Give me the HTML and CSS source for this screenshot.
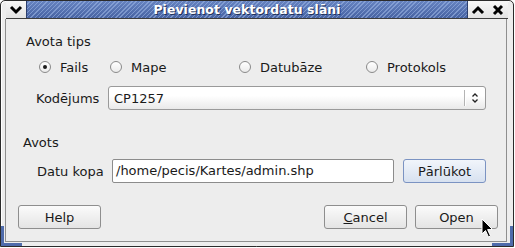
FILE: index.html
```html
<!DOCTYPE html>
<html lang="lv">
<head>
  <meta charset="UTF-8">
  <title>Pievienot vektordatu slāni</title>
  <link rel="stylesheet" href="styles.css">
</head>
<body>
  <div class="window">
    <div class="titlebar">
      <div class="tb-btn tb-menu">
        <svg width="14" height="10" viewBox="0 0 14 10"><path d="M2 2 L7 7 L12 2" fill="none" stroke="#000" stroke-width="3"/></svg>
      </div>
      <div class="tb-title">Pievienot vektordatu slāni</div>
      <div class="tb-btn">
        <svg width="14" height="10" viewBox="0 0 14 10"><path d="M2 8 L7 3 L12 8" fill="none" stroke="#000" stroke-width="3"/></svg>
      </div>
      <div class="tb-btn">
        <svg width="12" height="12" viewBox="0 0 12 12"><path d="M2 2 L10 10 M10 2 L2 10" fill="none" stroke="#000" stroke-width="3"/></svg>
      </div>
    </div>

    <div class="client">
      <div class="heading first">Avota tips</div>
      <div class="radios">
        <label class="radio"><span class="dot checked"></span>Fails</label>
        <label class="radio"><span class="dot"></span>Mape</label>
        <label class="radio"><span class="dot"></span>Datubāze</label>
        <label class="radio"><span class="dot"></span>Protokols</label>
      </div>
      <div class="row enc-row">
        <span class="label enc-label">Kodējums</span>
        <div class="combo">
          <span class="combo-text">CP1257</span>
          <span class="combo-sep"></span>
          <svg class="combo-arrows" width="8" height="12" viewBox="0 0 8 12"><path d="M1.5 4.5 L4 2 L6.5 4.5 M1.5 7.5 L4 10 L6.5 7.5" fill="none" stroke="#222" stroke-width="1.3"/></svg>
        </div>
      </div>

      <div class="heading second">Avots</div>
      <div class="row src-row">
        <span class="label src-label">Datu kopa</span>
        <div class="entry">/home/pecis/Kartes/admin.shp</div>
        <button class="btn btn-hover">Pārlūkot</button>
      </div>

      <div class="actions">
        <button class="btn">Help</button>
        <button class="btn cancel"><u>C</u>ancel</button>
        <button class="btn">Open</button>
      </div>
    </div>

    <span class="grip grip-left"></span>
    <span class="grip grip-right"></span>

    <svg class="cursor" width="14" height="21" viewBox="0 0 14 21">
      <path d="M1 1 L1 16 L4.5 12.5 L7.5 19 L9.5 18 L6.6 11.6 L11.5 11.5 Z" fill="#000" stroke="#fff" stroke-width="1"/>
    </svg>
  </div>
</body>
</html>
```

FILE: styles.css
```css
body {
  margin: 0;
  background: #ffffff;
  font-family: "DejaVu Sans", sans-serif;
  font-size: 13px;
  color: #1a1a1a;
}

.window {
  position: relative;
  width: 514px;
  height: 247px;
  box-sizing: border-box;
  border: 1px solid #2b2b2b;
  border-radius: 5px 5px 0 0;
  background: #ededed;
  box-shadow: inset 1px 1px 0 #ffffff;
  overflow: hidden;
}

/* title bar */
.titlebar {
  display: flex;
  height: 17px;
  margin-left: 5px;
  width: 502px;
  border-bottom: 1px solid #3d3d3d;
}

.tb-btn {
  width: 20px;
  display: flex;
  align-items: center;
  justify-content: center;
  background: linear-gradient(#f7f7f7, #e2e2e2);
}

.tb-menu {
  width: 20px;
}

.tb-title {
  flex: 1;
  text-align: center;
  font-weight: bold;
  font-size: 12.4px;
  line-height: 17px;
  color: #ffffff;
  text-shadow: 1px 1px 0 #23325a;
  letter-spacing: 0.1px;
  background:
    repeating-linear-gradient(135deg, rgba(255,255,255,0) 0 2px, rgba(160,185,230,0.55) 2px 3px),
    linear-gradient(#6683c0, #4763a3);
  border-left: 1px solid #2c3f6e;
  border-right: 1px solid #2c3f6e;
}

/* client area */
.client {
  margin-left: 4px;
  width: 502px;
  height: 223px;
  box-sizing: border-box;
  border: 1px solid #8e8e8e;
  border-top: none;
  padding-top: 15px;
}

.heading {
  line-height: 16px;
}

.heading.first {
  padding-left: 20px;
}

.heading.second {
  padding-left: 17px;
  margin-top: 25px;
}

.radios {
  display: grid;
  grid-template-columns: 71px 129px 127px auto;
  margin: 8px 0 0 33px;
  height: 18px;
  align-items: center;
}

.radio {
  display: flex;
  align-items: center;
  gap: 9px;
}

.dot {
  width: 12px;
  height: 12px;
  box-sizing: border-box;
  border-radius: 50%;
  border: 1px solid #8a8a8a;
  background: linear-gradient(#ffffff, #ebebeb);
  position: relative;
}

.dot.checked::after {
  content: "";
  position: absolute;
  left: 3px;
  top: 3px;
  width: 4px;
  height: 4px;
  border-radius: 50%;
  background: #1c1c1c;
}

.row {
  display: flex;
  align-items: center;
  height: 24px;
}

.enc-row {
  margin-top: 10px;
  padding-left: 30px;
}

.enc-label {
  width: 72px;
}

.combo {
  width: 378px;
  height: 24px;
  box-sizing: border-box;
  border: 1px solid #9a9a9a;
  border-radius: 3px;
  background: linear-gradient(#ffffff 40%, #e9e9e9);
  display: flex;
  align-items: center;
}

.combo-text {
  flex: 1;
  padding-left: 5px;
}

.combo-sep {
  width: 1px;
  height: 16px;
  background: #b4b4b4;
  box-shadow: 1px 0 0 #ffffff;
}

.combo-arrows {
  margin: 0 6px 0 6px;
}

.src-row {
  margin-top: 8px;
  padding-left: 31px;
}

.src-label {
  width: 75px;
}

.entry {
  width: 282px;
  height: 24px;
  box-sizing: border-box;
  border: 1px solid #8c8c8c;
  border-radius: 2px;
  background: #ffffff;
  padding-left: 3px;
  line-height: 22px;
}

.btn {
  width: 83px;
  height: 24px;
  box-sizing: border-box;
  border: 1px solid #8e8e8e;
  border-radius: 3px;
  background: linear-gradient(#fbfbfb, #e4e4e4);
  font-family: "DejaVu Sans", sans-serif;
  font-size: 13px;
  color: #1a1a1a;
  padding: 0;
}

.btn u {
  text-decoration-thickness: 1px;
}

.src-row .btn {
  margin-left: 9px;
}

.btn-hover {
  border-color: #7b93c2;
  background: linear-gradient(#f1f5fb, #d7e1f0);
}

.actions {
  display: flex;
  gap: 8px;
  margin-top: 22px;
  padding-left: 12px;
}

.actions .cancel {
  margin-left: auto;
}

.actions .btn:last-child {
  margin-right: 8px;
}

/* resize grips */
.grip {
  position: absolute;
  bottom: 0;
  width: 21px;
  height: 20px;
  border-bottom: 3px solid #4f6bab;
  box-sizing: border-box;
}

.grip-left {
  left: 0;
  border-left: 3px solid #4f6bab;
}

.grip-right {
  right: 0;
  border-right: 3px solid #4f6bab;
}

.cursor {
  position: absolute;
  left: 480px;
  top: 217px;
}
```
